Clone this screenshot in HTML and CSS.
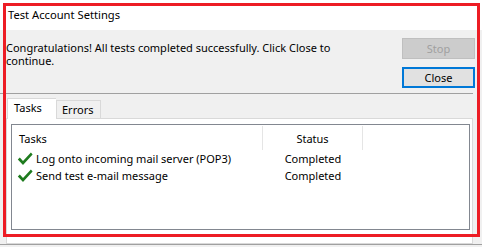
FILE: index.html
```html
<!DOCTYPE html>
<html>
<head>
<meta charset="utf-8">
<title>Test Account Settings</title>
<link rel="stylesheet" href="styles.css">
</head>
<body>
<div class="window">
  <div class="titlebar">Test Account Settings</div>
  <div class="dialog">
    <div class="top">
      <p class="msg">Congratulations! All tests completed successfully. Click Close to continue.</p>
      <div class="buttons">
        <button class="btn btn-disabled" disabled>Stop</button>
        <button class="btn btn-default">Close</button>
      </div>
    </div>
    <div class="sep"></div>
    <div class="tabs">
      <div class="tab tab-active">Tasks</div>
      <div class="tab">Errors</div>
    </div>
    <div class="tabpage">
      <div class="list">
        <div class="list-head">
          <div class="col col-task">Tasks</div>
          <div class="col col-status">Status</div>
          <div class="col col-rest"></div>
        </div>
        <div class="row">
          <div class="cell-task">
            <svg class="check" viewBox="0 0 16 14" width="16" height="14"><path d="M0.8 7.6 L2.8 5.6 L6 8.9 L13.9 0.6 L15.6 2.4 L6 12.9 Z"/></svg>
            <span>Log onto incoming mail server (POP3)</span>
          </div>
          <div class="cell-status">Completed</div>
        </div>
        <div class="row">
          <div class="cell-task">
            <svg class="check" viewBox="0 0 16 14" width="16" height="14"><path d="M0.8 7.6 L2.8 5.6 L6 8.9 L13.9 0.6 L15.6 2.4 L6 12.9 Z"/></svg>
            <span>Send test e-mail message</span>
          </div>
          <div class="cell-status">Completed</div>
        </div>
      </div>
    </div>
  </div>
  <div class="bottom"></div>
</div>
<div class="highlight"></div>
</body>
</html>
```
FILE: styles.css
```css
* { box-sizing: border-box; }
html, body { margin: 0; padding: 0; }
body {
  width: 482px;
  height: 247px;
  overflow: hidden;
  position: relative;
  background: #f0f0f0;
  font-family: "Noto Sans", "Open Sans", sans-serif;
  font-size: 11px;
  color: #000;
}
.window { display: flex; flex-direction: column; height: 247px; }
.titlebar {
  height: 30px;
  background: #fff;
  padding: 7px 0 0 8px;
  line-height: 16px;
  font-size: 11.2px;
}
.dialog { height: 214px; display: flex; flex-direction: column; }
.top { display: flex; height: 63px; padding-right: 7px; }
.msg {
  margin: 0;
  padding: 11px 0 0 6px;
  width: 370px;
  line-height: 13px;
  flex: none;
}
.buttons {
  margin-left: auto;
  padding-top: 8px;
  display: flex;
  flex-direction: column;
  gap: 8px;
}
.btn {
  width: 73px;
  height: 21px;
  font-family: inherit;
  font-size: 11px;
  padding: 0;
  line-height: 17px;
  color: #000;
}
.btn-disabled { background: #cccccc; border: 1px solid #bfbfbf; color: #a0a0a0; }
.btn-default { background: #e1e1e1; border: 2px solid #0078d7; }
.sep { height: 1px; background: #a0a0a0; margin-right: 9px; }
.tabs {
  height: 24px;
  display: flex;
  align-items: flex-end;
  padding-left: 7px;
}
.tab {
  height: 18px;
  width: 45px;
  padding-left: 5px;
  line-height: 18px;
  background: #f0f0f0;
  border: 1px solid #d9d9d9;
  border-bottom: none;
}
.tab-active {
  height: 21px;
  width: 49px;
  padding-left: 6px;
  line-height: 18px;
  background: #fff;
  margin-bottom: -1px;
  position: relative;
  z-index: 1;
  border-right: none;
}
.tabpage {
  flex: 1;
  margin: 0 9px 0 6px;
  background: #fff;
  border: 1px solid #d9d9d9;
  padding: 5px 2px 0 4px;
}
.list {
  height: 106px;
  border: 1px solid #828790;
  background: #fff;
}
.list-head { display: flex; height: 25px; line-height: 25px; }
.col { padding-top: 1px; }
.col-task { width: 251px; padding-left: 7px; border-right: 1px solid #e5e5e5; margin-top: 1px; line-height: 24px; }
.col-status { width: 100px; text-align: center; border-right: 1px solid #e5e5e5; margin-top: 1px; line-height: 24px; }
.row { display: flex; height: 17px; line-height: 17px; }
.cell-task { width: 251px; display: flex; align-items: center; padding-left: 5px; gap: 3px; }
.cell-status { width: 100px; text-align: center; }
.check { fill: #1e7b1e; flex: none; }
.bottom { height: 3px; border-top: 1px solid #a0a0a0; margin-top: 0; }
.highlight {
  position: absolute;
  left: 3px;
  top: 3px;
  width: 477px;
  height: 234px;
  border: 3px solid #ed1c24;
  pointer-events: none;
}
```
